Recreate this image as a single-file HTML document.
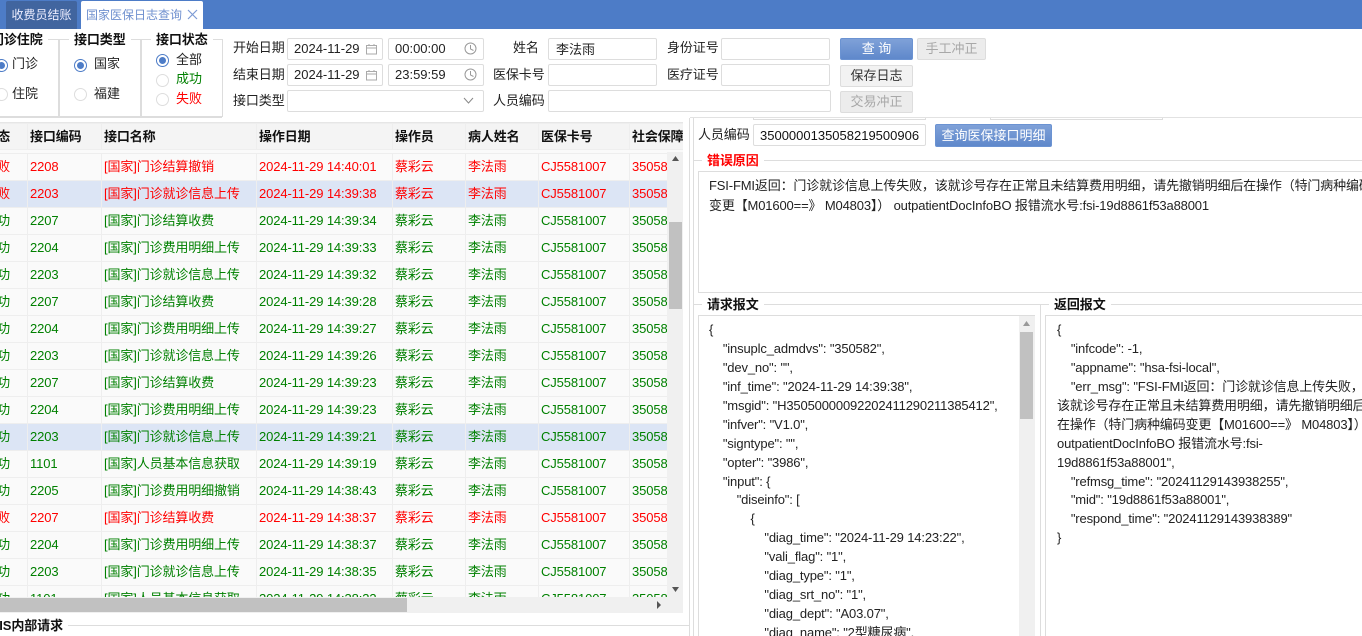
<!DOCTYPE html>
<html><head><meta charset="utf-8">
<style>
html{margin:0;padding:0;background:#fff;width:1362px;height:636px;overflow:hidden}
body{margin:0;padding:0;background:#fff;width:1362px;height:636px;overflow:hidden;position:relative;font:13px/16px "Liberation Sans","Noto Sans CJK SC",sans-serif;color:#222}
#w{position:absolute;left:0;top:0;width:1362px;height:636px;overflow:hidden}
.a{position:absolute;white-space:nowrap}
.b{position:absolute;box-sizing:border-box;border:1px solid #ddd;background:#fff;border-radius:2px}
.l{position:absolute;background:#ddd}
.lb{position:absolute;white-space:nowrap;text-align:right;line-height:20px;letter-spacing:-.1px}
.lg{position:absolute;white-space:nowrap;font-weight:bold;background:#fff;padding:0 5px;line-height:16px;color:#111;letter-spacing:-.1px}
.r{position:absolute;width:13px;height:13px;border:1px solid #ddd;border-radius:50%;box-sizing:border-box;background:#fff}
.r.on{border-color:#4d7cc7}
.r.on:after{content:"";position:absolute;left:2px;top:2px;width:7px;height:7px;border-radius:50%;background:#4d7cc7}
.btn{position:absolute;box-sizing:border-box;text-align:center;border:1px solid #ddd;background:#f2f2f2;border-radius:2px;line-height:20px;color:#333}
.btn.p{background:linear-gradient(#7fa1d8,#5f88cb);border-color:#6b93d2;color:#fff}
.btn.d{color:#a8a8a8;background:#ececec}
table{border-collapse:collapse;table-layout:fixed;position:absolute;letter-spacing:-.12px}
td{height:26px;padding:0 0 0 2px;border:1px solid #eee;overflow:hidden;white-space:nowrap;line-height:26px;box-sizing:border-box}
td.f{text-align:right;padding-right:17px;padding-left:0}
tr{height:27px;background:#fafafa}
tr.s{background:#dce5f5}
tr.g{color:#008000}
tr.e{color:#f00}
.j{position:absolute;white-space:pre;line-height:18.93px;font-size:13px;letter-spacing:-.15px;color:#222}
</style></head><body><div id="w">

<!-- top bar -->
<div class="a" style="left:0;top:0;width:1362px;height:29px;background:#4d7cc7"></div>
<div class="a" style="left:6px;top:1px;width:71px;height:28px;background:#41659f;color:#eef;line-height:28px;font-size:12px;text-align:center;border-radius:2px 2px 0 0">收费员结账</div>
<div class="a" style="left:81px;top:1px;width:122px;height:28px;background:#fff;color:#6f90cf;line-height:28px;font-size:12px;padding-left:5px;box-sizing:border-box;border-radius:2px 2px 0 0">国家医保日志查询</div>
<svg class="a" style="left:187px;top:9px" width="11" height="11"><path d="M1 1L10 10M10 1L1 10" stroke="#7d9bd4" stroke-width="1.2" fill="none"/></svg>

<!-- fieldsets -->
<div class="l" style="left:0;top:116px;width:222px;height:2px;background:#ddd"></div>
<div class="l" style="left:0;top:39px;width:222px;height:1px"></div>
<div class="l" style="left:58px;top:39px;width:2px;height:77px"></div>
<div class="l" style="left:140px;top:39px;width:2px;height:77px"></div>
<div class="l" style="left:222px;top:39px;width:1px;height:78px"></div>
<div class="lg" style="left:-14px;top:32px">门诊住院</div>
<div class="lg" style="left:69px;top:32px">接口类型</div>
<div class="lg" style="left:151px;top:32px">接口状态</div>

<div class="r on" style="left:-5px;top:59px"></div><div class="a" style="left:12px;top:56px">门诊</div>
<div class="r" style="left:-5px;top:88px"></div><div class="a" style="left:12px;top:86px">住院</div>
<div class="r on" style="left:74px;top:59px"></div><div class="a" style="left:94px;top:56px">国家</div>
<div class="r" style="left:74px;top:88px"></div><div class="a" style="left:94px;top:86px">福建</div>
<div class="r on" style="left:156px;top:54px"></div><div class="a" style="left:176px;top:52px">全部</div>
<div class="r" style="left:156px;top:74px"></div><div class="a" style="left:176px;top:71px;color:#008000">成功</div>
<div class="r" style="left:156px;top:93px"></div><div class="a" style="left:176px;top:91px;color:#f00">失败</div>

<!-- form -->
<div class="lb" style="left:233px;top:38px">开始日期</div>
<div class="lb" style="left:233px;top:65px">结束日期</div>
<div class="lb" style="left:233px;top:91px">接口类型</div>
<div class="b" style="left:287px;top:38px;width:96px;height:22px;padding-left:6px;line-height:20px">2024-11-29</div>
<div class="b" style="left:388px;top:38px;width:96px;height:22px;padding-left:6px;line-height:20px">00:00:00</div>
<div class="b" style="left:287px;top:64px;width:96px;height:22px;padding-left:6px;line-height:20px">2024-11-29</div>
<div class="b" style="left:388px;top:64px;width:96px;height:22px;padding-left:6px;line-height:20px">23:59:59</div>
<div class="b" style="left:287px;top:90px;width:197px;height:22px"></div>
<svg class="a" style="left:365px;top:43px" width="13" height="12"><path d="M1.5 2.5H11.5V11H1.5ZM1.5 5H11.5M4 1V3M9 1V3" stroke="#aaa" fill="none"/></svg>
<svg class="a" style="left:365px;top:69px" width="13" height="12"><path d="M1.5 2.5H11.5V11H1.5ZM1.5 5H11.5M4 1V3M9 1V3" stroke="#aaa" fill="none"/></svg>
<svg class="a" style="left:464px;top:42px" width="13" height="13"><circle cx="6.5" cy="6.5" r="5.5" stroke="#999" fill="none"/><path d="M6.5 3V7L9.5 8.5" stroke="#999" fill="none"/></svg>
<svg class="a" style="left:464px;top:68px" width="13" height="13"><circle cx="6.5" cy="6.5" r="5.5" stroke="#999" fill="none"/><path d="M6.5 3V7L9.5 8.5" stroke="#999" fill="none"/></svg>
<svg class="a" style="left:463px;top:96px" width="11" height="9"><path d="M1 2L5.5 7L10 2" stroke="#888" fill="none"/></svg>

<div class="lb" style="left:513px;top:38px">姓名</div>
<div class="lb" style="left:493px;top:65px">医保卡号</div>
<div class="lb" style="left:493px;top:91px">人员编码</div>
<div class="lb" style="left:667px;top:38px">身份证号</div>
<div class="lb" style="left:667px;top:65px">医疗证号</div>
<div class="b" style="left:548px;top:38px;width:109px;height:22px;padding-left:7px;line-height:21px">李法雨</div>
<div class="b" style="left:548px;top:64px;width:109px;height:22px"></div>
<div class="b" style="left:548px;top:90px;width:283px;height:22px"></div>
<div class="b" style="left:721px;top:38px;width:109px;height:22px"></div>
<div class="b" style="left:721px;top:64px;width:109px;height:22px"></div>
<div class="btn p" style="left:840px;top:38px;width:73px;height:22px">查 询</div>
<div class="btn d" style="left:917px;top:38px;width:69px;height:22px">手工冲正</div>
<div class="btn" style="left:840px;top:65px;width:73px;height:22px">保存日志</div>
<div class="btn d" style="left:840px;top:91px;width:73px;height:22px">交易冲正</div>

<!-- left table -->
<div class="a" style="left:0;top:122px;width:683px;height:491px;overflow:hidden;background:#fafafa;border-top:1px solid #e6e6e6;border-bottom:1px solid #e6e6e6;box-sizing:border-box">
<table style="left:-20px;top:0;width:709px;font-weight:bold;color:#111">
<colgroup><col style="width:47px"><col style="width:74px"><col style="width:155px"><col style="width:136px"><col style="width:73px"><col style="width:73px"><col style="width:91px"><col style="width:60px"></colgroup>
<tr style="background:#f4f4f4;height:26px"><td class="f" style="line-height:23px">状态</td><td style="line-height:23px">接口编码</td><td style="line-height:23px">接口名称</td><td style="line-height:23px">操作日期</td><td style="line-height:23px">操作员</td><td style="line-height:23px">病人姓名</td><td style="line-height:23px">医保卡号</td><td style="line-height:23px">社会保障号</td></tr>
</table>
<table style="left:-20px;top:30px;width:709px">
<colgroup><col style="width:47px"><col style="width:74px"><col style="width:155px"><col style="width:136px"><col style="width:73px"><col style="width:73px"><col style="width:91px"><col style="width:60px"></colgroup>
<tr class="e"><td class="f">失败</td><td>2208</td><td>[国家]门诊结算撤销</td><td>2024-11-29 14:40:01</td><td>蔡彩云</td><td>李法雨</td><td>CJ5581007</td><td>35058</td></tr>
<tr class="e s"><td class="f">失败</td><td>2203</td><td>[国家]门诊就诊信息上传</td><td>2024-11-29 14:39:38</td><td>蔡彩云</td><td>李法雨</td><td>CJ5581007</td><td>35058</td></tr>
<tr class="g"><td class="f">成功</td><td>2207</td><td>[国家]门诊结算收费</td><td>2024-11-29 14:39:34</td><td>蔡彩云</td><td>李法雨</td><td>CJ5581007</td><td>35058</td></tr>
<tr class="g"><td class="f">成功</td><td>2204</td><td>[国家]门诊费用明细上传</td><td>2024-11-29 14:39:33</td><td>蔡彩云</td><td>李法雨</td><td>CJ5581007</td><td>35058</td></tr>
<tr class="g"><td class="f">成功</td><td>2203</td><td>[国家]门诊就诊信息上传</td><td>2024-11-29 14:39:32</td><td>蔡彩云</td><td>李法雨</td><td>CJ5581007</td><td>35058</td></tr>
<tr class="g"><td class="f">成功</td><td>2207</td><td>[国家]门诊结算收费</td><td>2024-11-29 14:39:28</td><td>蔡彩云</td><td>李法雨</td><td>CJ5581007</td><td>35058</td></tr>
<tr class="g"><td class="f">成功</td><td>2204</td><td>[国家]门诊费用明细上传</td><td>2024-11-29 14:39:27</td><td>蔡彩云</td><td>李法雨</td><td>CJ5581007</td><td>35058</td></tr>
<tr class="g"><td class="f">成功</td><td>2203</td><td>[国家]门诊就诊信息上传</td><td>2024-11-29 14:39:26</td><td>蔡彩云</td><td>李法雨</td><td>CJ5581007</td><td>35058</td></tr>
<tr class="g"><td class="f">成功</td><td>2207</td><td>[国家]门诊结算收费</td><td>2024-11-29 14:39:23</td><td>蔡彩云</td><td>李法雨</td><td>CJ5581007</td><td>35058</td></tr>
<tr class="g"><td class="f">成功</td><td>2204</td><td>[国家]门诊费用明细上传</td><td>2024-11-29 14:39:23</td><td>蔡彩云</td><td>李法雨</td><td>CJ5581007</td><td>35058</td></tr>
<tr class="g s"><td class="f">成功</td><td>2203</td><td>[国家]门诊就诊信息上传</td><td>2024-11-29 14:39:21</td><td>蔡彩云</td><td>李法雨</td><td>CJ5581007</td><td>35058</td></tr>
<tr class="g"><td class="f">成功</td><td>1101</td><td>[国家]人员基本信息获取</td><td>2024-11-29 14:39:19</td><td>蔡彩云</td><td>李法雨</td><td>CJ5581007</td><td>35058</td></tr>
<tr class="g"><td class="f">成功</td><td>2205</td><td>[国家]门诊费用明细撤销</td><td>2024-11-29 14:38:43</td><td>蔡彩云</td><td>李法雨</td><td>CJ5581007</td><td>35058</td></tr>
<tr class="e"><td class="f">失败</td><td>2207</td><td>[国家]门诊结算收费</td><td>2024-11-29 14:38:37</td><td>蔡彩云</td><td>李法雨</td><td>CJ5581007</td><td>35058</td></tr>
<tr class="g"><td class="f">成功</td><td>2204</td><td>[国家]门诊费用明细上传</td><td>2024-11-29 14:38:37</td><td>蔡彩云</td><td>李法雨</td><td>CJ5581007</td><td>35058</td></tr>
<tr class="g"><td class="f">成功</td><td>2203</td><td>[国家]门诊就诊信息上传</td><td>2024-11-29 14:38:35</td><td>蔡彩云</td><td>李法雨</td><td>CJ5581007</td><td>35058</td></tr>
<tr class="g"><td class="f">成功</td><td>1101</td><td>[国家]人员基本信息获取</td><td>2024-11-29 14:38:33</td><td>蔡彩云</td><td>李法雨</td><td>CJ5581007</td><td>35058</td></tr>
</table>
</div>
<!-- left scrollbars -->
<div class="a" style="left:667px;top:152px;width:16px;height:461px;background:#f0f0f0"></div>
<div class="a" style="left:669px;top:222px;width:13px;height:87px;background:#c1c1c1"></div>
<svg class="a" style="left:671px;top:156px" width="9" height="6"><path d="M4.5 0L8 5H1Z" fill="#555"/></svg>
<svg class="a" style="left:671px;top:586px" width="9" height="6"><path d="M4.5 6L8 1H1Z" fill="#555"/></svg>
<div class="a" style="left:0;top:597px;width:667px;height:16px;background:#f0f0f0"></div>
<div class="a" style="left:0;top:598px;width:407px;height:14px;background:#c1c1c1"></div>
<svg class="a" style="left:656px;top:600px" width="6" height="10"><path d="M1 1L5 5L1 9Z" fill="#555"/></svg>

<!-- HIS section -->
<div class="l" style="left:0;top:625px;width:690px;height:1px"></div>
<div class="lg" style="left:-15px;top:618px">HIS内部请求</div>

<!-- splitter lines -->
<div class="l" style="left:689px;top:118px;width:1px;height:518px"></div>
<div class="l" style="left:693px;top:118px;width:1px;height:518px"></div>

<!-- right top -->
<div class="l" style="left:690px;top:117px;width:672px;height:1px;background:#e2e2e2"></div>
<div class="a" style="left:753px;top:118px;width:173px;height:2px;border:1px solid #ddd;border-top:0;box-sizing:border-box"></div>
<div class="a" style="left:990px;top:118px;width:173px;height:2px;border:1px solid #ddd;border-top:0;box-sizing:border-box"></div>
<div class="lb" style="left:698px;top:125px">人员编码</div>
<div class="b" style="left:753px;top:124px;width:173px;height:22px"></div>
<div class="a" style="left:760px;top:125px;width:162px;height:20px;line-height:21px;overflow:hidden;color:#111">3500000135058219500906 17</div>
<div class="btn p" style="left:935px;top:124px;width:117px;height:23px;line-height:22px">查询医保接口明细</div>

<!-- error -->
<div class="l" style="left:694px;top:160px;width:668px;height:1px"></div>
<div class="lg" style="left:702px;top:153px;color:#f00">错误原因</div>
<div class="a" style="left:698px;top:171px;width:680px;height:122px;border:1px solid #ddd;box-sizing:border-box;background:#fff"></div>
<div class="j" style="left:709px;top:176px;line-height:20px">FSI-FMI返回：门诊就诊信息上传失败，该就诊号存在正常且未结算费用明细，请先撤销明细后在操作（特门病种编码
变更【M01600==》 M04803】） outpatientDocInfoBO 报错流水号:fsi-19d8861f53a88001</div>

<!-- request -->
<div class="l" style="left:694px;top:304px;width:668px;height:1px"></div>
<div class="l" style="left:1040px;top:304px;width:1px;height:332px"></div>
<div class="lg" style="left:702px;top:297px">请求报文</div>
<div class="lg" style="left:1049px;top:297px">返回报文</div>
<div class="a" style="left:698px;top:315px;width:337px;height:322px;border:1px solid #ddd;box-sizing:border-box;background:#fff"></div>
<div class="a" style="left:1019px;top:316px;width:16px;height:320px;background:#f0f0f0"></div>
<div class="a" style="left:1020px;top:332px;width:13px;height:87px;background:#c1c1c1"></div>
<svg class="a" style="left:1022px;top:321px" width="9" height="6"><path d="M4.5 0L8 5H1Z" fill="#999"/></svg>
<div class="j" style="left:709px;top:321px">{
    "insuplc_admdvs": "350582",
    "dev_no": "",
    "inf_time": "2024-11-29 14:39:38",
    "msgid": "H35050000092202411290211385412",
    "infver": "V1.0",
    "signtype": "",
    "opter": "3986",
    "input": {
        "diseinfo": [
            {
                "diag_time": "2024-11-29 14:23:22",
                "vali_flag": "1",
                "diag_type": "1",
                "diag_srt_no": "1",
                "diag_dept": "A03.07",
                "diag_name": "2型糖尿病",</div>

<!-- response -->
<div class="a" style="left:1045px;top:315px;width:340px;height:322px;border:1px solid #ddd;box-sizing:border-box;background:#fff"></div>
<div class="j" style="left:1057px;top:321px">{
    "infcode": -1,
    "appname": "hsa-fsi-local",
    "err_msg": "FSI-FMI返回：门诊就诊信息上传失败，
该就诊号存在正常且未结算费用明细，请先撤销明细后
在操作（特门病种编码变更【M01600==》 M04803】）
outpatientDocInfoBO 报错流水号:fsi-
19d8861f53a88001",
    "refmsg_time": "20241129143938255",
    "mid": "19d8861f53a88001",
    "respond_time": "20241129143938389"
}</div>

</div></body></html>
